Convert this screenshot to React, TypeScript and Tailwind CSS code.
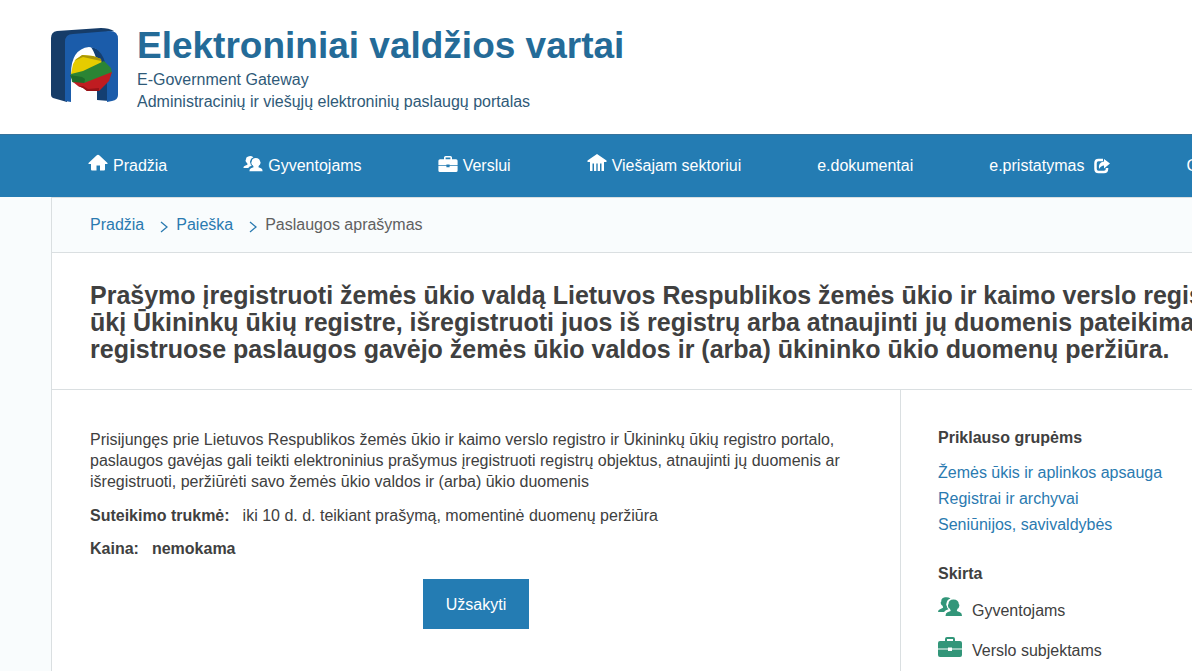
import type { ReactNode } from 'react'

function LogoIcon() {
  return (
    <svg className="h-[76px] w-[68px] shrink-0" viewBox="0 0 68 76" aria-hidden="true">
      <path d="M0 10Q0 4 6 3L50 0Q58 0 63 3L24 8L16 12V74L2 70Q0 69 0 67Z" fill="#163c68" />
      <path d="M40 19Q57 22 58 44V73L46 72V60Q50 34 40 19Z" fill="#143f72" />
      <path
        d="M14 14Q14 6 22 6L59 3Q67 3 67 11V67Q67 72 61 73L56 74V46Q54 20 38 19Q20 21 20 46V74L14 73Z"
        fill="#1b5caa"
      />
      <path d="M20 46L22 36L25 31L32 27L42 28L50 31L51 36L33 45L22 49Z" fill="#e6cc00" />
      <path d="M23 33L31 27L42 28L50 31L50 33L41 31L32 29Z" fill="#a99608" />
      <path d="M20 46L32 43L53 33L60 40L61 45L34 57L21 54Z" fill="#2b8434" />
      <path d="M19 47L31 49L34 51L33 57L22 54Z" fill="#1d6b2a" />
      <path d="M22 54L33 55L61 44L58 53L53 58L48 63L36 63L32 60L27 58Z" fill="#c01c21" />
      <path d="M27 58L32 58L37 61L48 60L48 63L36 63L32 60Z" fill="#981318" />
    </svg>
  )
}

function HomeIcon() {
  return (
    <svg className="h-5 w-5" viewBox="0 0 20 20" fill="currentColor" aria-hidden="true">
      <path d="M8.500 1.500Q10 0 11.500 1.500L19.500 9V10H17V15.500Q17 16.500 16 16.500H12V11.500H8.500V16.500H4Q3 16.500 3 15.500V10H0.500V9Z" />
    </svg>
  )
}

function PeopleIcon({ className }: { className: string }) {
  return (
    <svg className={className} viewBox="0 0 24 20" fill="currentColor" aria-hidden="true">
      <path d="M12.500 1.500Q10 -0.300 7 0.300Q3 1 3.300 4.500Q2.300 5 3 7Q3.300 8 4.300 8.500Q5.300 10 5 10.800L2 12.300Q0 13 0 15H6Q7.500 13 10.500 12.300Q8.800 10.800 8.800 9Q7.800 8 8.500 6.300Q8.800 2.800 12.500 1.500Z" />
      <path d="M15.500 2.500Q20.500 2.500 20.800 7Q22 7.500 21 10Q20.500 11.500 19.700 11.500Q18.800 13 18.800 14L22 15.300Q24 16 24 19H7.500Q7.500 16 9.500 15.300L12.700 14Q12.700 13 11.700 11.500Q10.800 11.500 10.200 10Q9.500 7.500 10.500 7Q10.500 2.500 15.500 2.500Z" />
    </svg>
  )
}

function BriefcaseIcon({ className }: { className: string }) {
  return (
    <svg className={className} viewBox="0 0 24 20" fill="currentColor" aria-hidden="true">
      <path
        fillRule="evenodd"
        d="M7 4V2Q7 0 9 0H15Q17 0 17 2V4H22Q24 4 24 6V11.500H14V10.500H10V11.500H0V6Q0 4 2 4ZM9 4H15V2H9Z"
      />
      <path d="M0 12.500H10V14H14V12.500H24V18Q24 20 22 20H2Q0 20 0 18Z" />
    </svg>
  )
}

function BankIcon() {
  return (
    <svg className="h-5 w-5" viewBox="0 0 20 20" fill="currentColor" aria-hidden="true">
      <path d="M10 0L19.500 6.500V8H0.500V6.500ZM3 8H17V9.500H3ZM3 9H5.500V17H3ZM7 9H9.300V17H7ZM10.700 9H13V17H10.700ZM14.500 9H17V17H14.500Z" />
    </svg>
  )
}

function ShareIcon() {
  return (
    <svg className="ml-[10px] h-4 w-4" viewBox="0 0 16 16" fill="none" aria-hidden="true">
      <path d="M9 2H4.500Q1.500 2 1.500 5V11Q1.500 14 4.500 14H10Q13 14 13 11V10" stroke="currentColor" strokeWidth="2.500" />
      <path d="M10 1L16 5.500L10 10.500V7.500Q7 7.500 5 11Q4 4 10 3.500Z" fill="currentColor" />
    </svg>
  )
}

function Chevron() {
  return (
    <svg className="mt-1 ml-4 mr-2 h-3 w-2" viewBox="0 0 8 12" fill="none" aria-hidden="true">
      <path d="M1 1L7 6L1 11" stroke="#2a7ab0" strokeWidth="1.300" />
    </svg>
  )
}

function NavItem({ icon, children }: { icon?: ReactNode; children: ReactNode }) {
  return (
    <a href="#" className="flex shrink-0 items-center gap-[5px] whitespace-nowrap">
      {icon && <span className="-mt-1">{icon}</span>}
      <span className="flex items-center">{children}</span>
    </a>
  )
}

const groups = ['Žemės ūkis ir aplinkos apsauga', 'Registrai ir archyvai', 'Seniūnijos, savivaldybės']

export default function App() {
  return (
    <div className="flex min-h-screen flex-col overflow-x-hidden bg-white font-['Liberation_Sans',Arial,sans-serif] text-base text-[#404040]">
      <header className="flex h-[134px] items-start gap-[18px] pt-7 pl-[51px]">
        <LogoIcon />
        <div className="text-[#2f5a78]">
          <div className="text-[37px] leading-9 font-bold whitespace-nowrap text-[#246b98]">Elektroniniai valdžios vartai</div>
          <p className="mt-[5px] leading-[22px]">E-Government Gateway</p>
          <p className="leading-[22px]">Administracinių ir viešųjų elektroninių paslaugų portalas</p>
        </div>
      </header>

      <nav className="flex h-[63px] items-center gap-[76px] overflow-hidden border-t border-[#38739b] bg-[#247cb3] pl-[88px] text-white">
        <NavItem icon={<HomeIcon />}>Pradžia</NavItem>
        <NavItem icon={<PeopleIcon className="h-4 w-5" />}>Gyventojams</NavItem>
        <NavItem icon={<BriefcaseIcon className="h-4 w-5" />}>Verslui</NavItem>
        <NavItem icon={<BankIcon />}>Viešajam sektoriui</NavItem>
        <NavItem>e.dokumentai</NavItem>
        <NavItem>
          e.pristatymas
          <ShareIcon />
        </NavItem>
        <NavItem>G</NavItem>
      </nav>

      <div className="flex flex-1 flex-col bg-[#f9fcfd] pl-[51px]">
        <main className="flex flex-1 flex-col border-l border-[#dadfe1]">
          <div className="flex h-14 items-center border-t border-b border-[#dadfe1] pl-[38px]">
            <a href="#" className="text-[#2a7ab0]">Pradžia</a>
            <Chevron />
            <a href="#" className="text-[#2a7ab0]">Paieška</a>
            <Chevron />
            <span className="text-[#606060]">Paslaugos aprašymas</span>
          </div>

          <div className="overflow-hidden border-b border-[#dadfe1] bg-white pt-[29px] pb-[26px] pl-[38px]">
            <h1 className="text-[25px] leading-[27px] font-bold whitespace-nowrap">
              Prašymo įregistruoti žemės ūkio valdą Lietuvos Respublikos žemės ūkio ir kaimo verslo registre,
              <br />
              ūkį Ūkininkų ūkių registre, išregistruoti juos iš registrų arba atnaujinti jų duomenis pateikimas,
              <br />
              registruose paslaugos gavėjo žemės ūkio valdos ir (arba) ūkininko ūkio duomenų peržiūra.
            </h1>
          </div>

          <div className="flex flex-1 bg-white">
            <section className="flex-1 px-[38px] pt-[39px]">
              <p className="leading-[21px]">
                Prisijungęs prie Lietuvos Respublikos žemės ūkio ir kaimo verslo registro ir Ūkininkų ūkių registro portalo,
                paslaugos gavėjas gali teikti elektroninius prašymus įregistruoti registrų objektus, atnaujinti jų duomenis ar
                išregistruoti, peržiūrėti savo žemės ūkio valdos ir (arba) ūkio duomenis
              </p>
              <p className="mt-[13px] leading-[21px]">
                <strong className="mr-[13px]">Suteikimo trukmė:</strong>
                iki 10 d. d. teikiant prašymą, momentinė duomenų peržiūra
              </p>
              <p className="mt-3 leading-[21px] font-bold">
                <span className="mr-[13px]">Kaina:</span>
                nemokama
              </p>
              <div className="mt-5 flex justify-center">
                <button type="button" className="h-[50px] w-[106px] bg-[#247cb3] pt-px text-white">Užsakyti</button>
              </div>
            </section>

            <aside className="w-[292px] shrink-0 border-l border-[#dadfe1] pt-9 pl-[37px]">
              <h2 className="leading-6 font-bold">Priklauso grupėms</h2>
              <ul className="mt-[10px] whitespace-nowrap">
                {groups.map((group) => (
                  <li key={group} className="leading-[26px]">
                    <a href="#" className="text-[#2a7ab0]">{group}</a>
                  </li>
                ))}
              </ul>
              <h2 className="mt-6 leading-6 font-bold">Skirta</h2>
              <ul className="mt-[5px]">
                <li className="flex h-10 items-center gap-[10px]">
                  <PeopleIcon className="mb-2 h-5 w-6 text-[#329679]" />
                  Gyventojams
                </li>
                <li className="flex h-10 items-center gap-[10px]">
                  <BriefcaseIcon className="mb-2 h-5 w-6 text-[#329679]" />
                  Verslo subjektams
                </li>
              </ul>
            </aside>
          </div>
        </main>
      </div>
    </div>
  )
}
